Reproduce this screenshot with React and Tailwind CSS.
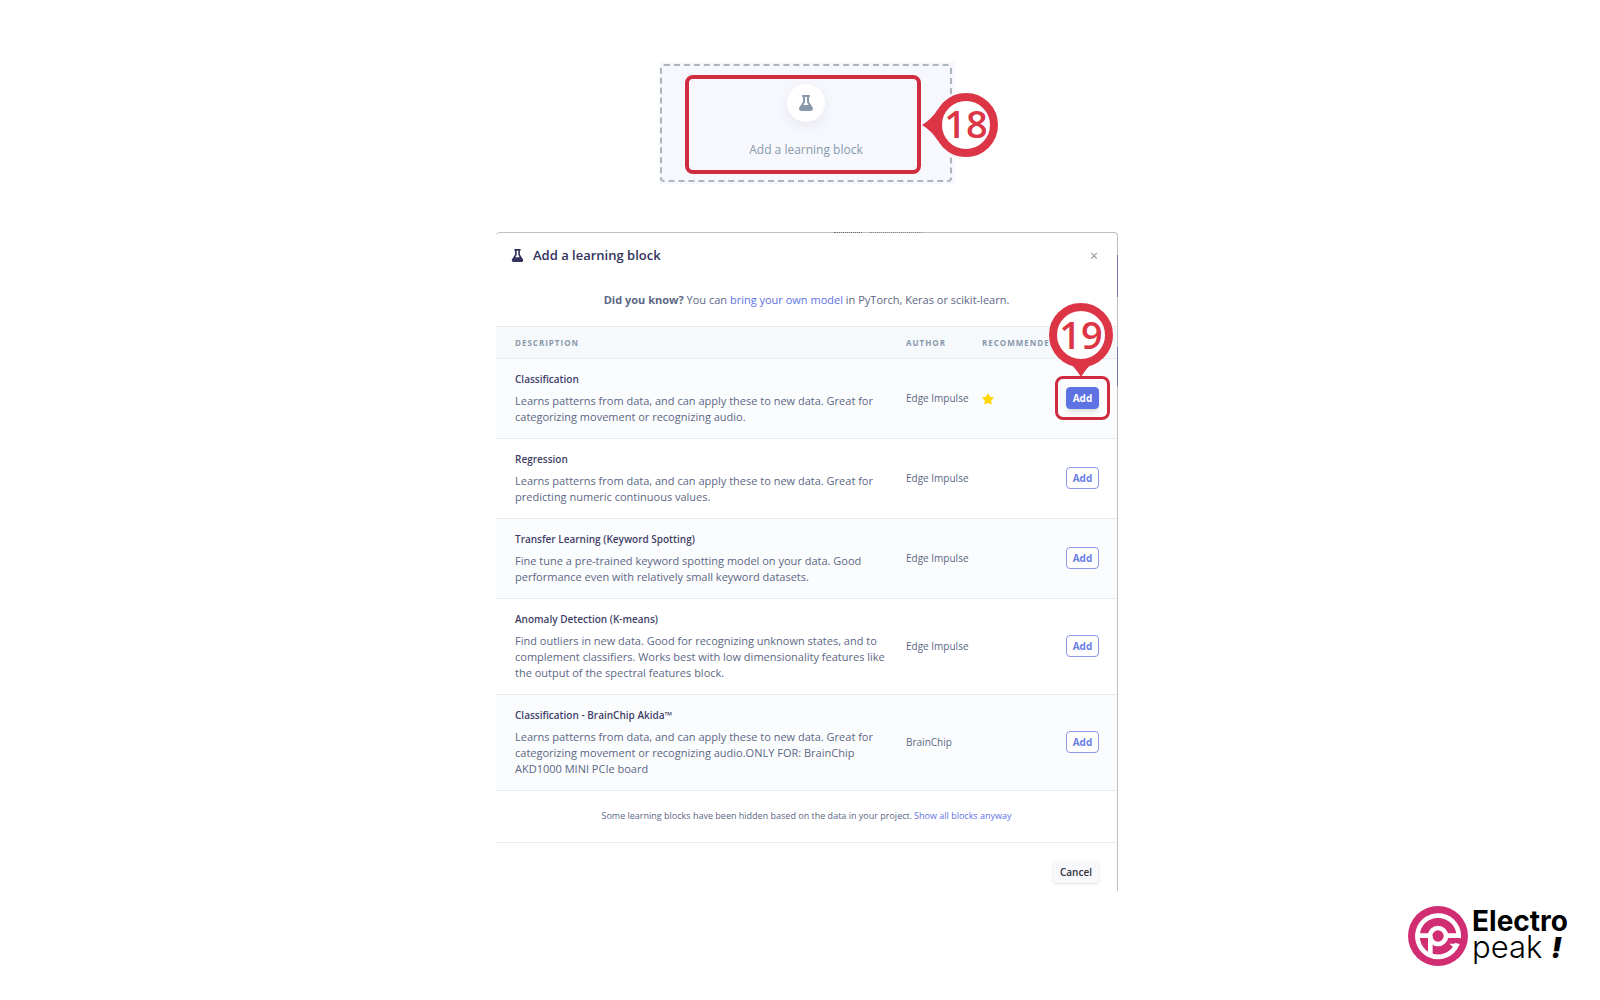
import { useState } from "react";
import { FaFlask, FaStar } from "react-icons/fa";

const blocks = [
    {
        name: "Classification",
        text: "Learns patterns from data, and can apply these to new data. Great for categorizing movement or recognizing audio.",
        author: "Edge Impulse",
        recommended: true
    },
    {
        name: "Regression",
        text: "Learns patterns from data, and can apply these to new data. Great for predicting numeric continuous values.",
        author: "Edge Impulse"
    },
    {
        name: "Transfer Learning (Keyword Spotting)",
        text: "Fine tune a pre-trained keyword spotting model on your data. Good performance even with relatively small keyword datasets.",
        author: "Edge Impulse"
    },
    {
        name: "Anomaly Detection (K-means)",
        text: "Find outliers in new data. Good for recognizing unknown states, and to complement classifiers. Works best with low dimensionality features like the output of the spectral features block.",
        author: "Edge Impulse"
    },
    {
        name: "Classification - BrainChip Akida™",
        text: "Learns patterns from data, and can apply these to new data. Great for categorizing movement or recognizing audio.ONLY FOR: BrainChip AKD1000 MINI PCIe board",
        author: "BrainChip"
    }
];

// numbered pin, the tip points left or down
function Marker({ number, tip, className }) {
    return (
        <svg className={className} width="76" height="76" viewBox="0 0 76 76" aria-label={`Step ${number}`}>
            {tip === "left"
                ? <path d="M0 38 Q10 32 16 22 L16 54 Q10 44 0 38Z" fill="#dc3545" />
                : <path d="M38 76 Q32 66 22 58 L54 58 Q44 66 38 76Z" fill="#dc3545" />}
            <circle cx={tip === "left" ? 44 : 38} cy={tip === "left" ? 38 : 34} r="28" fill="#fff" stroke="#dc3545" strokeWidth="8" />
            <text x={tip === "left" ? 44 : 38} y={tip === "left" ? 51 : 48} textAnchor="middle" fill="#dc3545" className="font-['Open_Sans',sans-serif] text-[38px] font-semibold">{number}</text>
        </svg>
    )
}

function Logo() {
    return (
        <div className="flex items-center gap-1 text-black">
            <svg width="60" height="60" viewBox="0 0 180 180" aria-hidden="true">
                <circle cx="90" cy="90" r="90" fill="#d12d72" />
                <g fill="none" stroke="#fff" strokeWidth="14">
                    <path d="M152 96 A62 62 0 1 0 67 148" />
                    <path d="M61 145 A62 62 0 0 0 148 113" />
                    <circle cx="90" cy="90" r="24" />
                    <path d="M30 89 H66 M114 89 H156" />
                    <path d="M67 90 V150" />
                </g>
                <path d="M124 113 H155 L148 126 L136 124Z" fill="#fff" />
            </svg>
            <div className="pb-1 font-['Inter',sans-serif]">
                <p className="text-[28px] leading-[26px] font-bold">Electro</p>
                <p className="text-[31px] leading-[26px] font-light">peak <span className="text-[28px] font-black italic">!</span></p>
            </div>
        </div>
    )
}

export default function App() {

    const [selected, setSelected] = useState("Classification");

    return (
        <div className="min-h-screen bg-white flex flex-col font-['Open_Sans',sans-serif] text-[#5c6784]">
            <main className="flex flex-col items-center gap-12 pt-[62px] pl-[14px]">
                <div className="relative w-[296px] bg-[#f7f8fd] py-[2px] pl-[1px] pr-[3px]">
                    <button className="w-full h-[118px] flex flex-col items-center rounded border-2 border-dashed border-[#adb5bd] pt-[18px]">
                        <span className="w-[38px] h-[38px] flex justify-center items-center rounded-full bg-white text-[#8898aa] shadow-[0_4px_12px_rgba(50,50,93,0.08)]">
                            <FaFlask size={16} />
                        </span>
                        <span className="mt-[19px] text-[12px] leading-[18px] text-[#8898aa]">Add a learning block</span>
                    </button>
                    <div className="absolute left-[26px] top-[13px] w-[236px] h-[99px] rounded-lg border-4 border-[#cf2c3f] pointer-events-none"></div>
                    <Marker number="18" tip="left" className="absolute left-[263px] top-[25px]" />
                </div>

                <section role="dialog" aria-labelledby="dialog-title" className="relative w-full max-w-[622px] bg-white border-t border-r border-[#bfc0c4] rounded-t">
                    {/* page behind the dialog showing at its edges */}
                    <span className="absolute -top-px left-[338px] w-[28px] border-t border-dotted border-[#6a6a7a]"></span>
                    <span className="absolute -top-px left-[374px] w-[52px] border-t border-dotted border-[#8a8a9a]"></span>
                    <span className="absolute -right-px top-[22px] h-[42px] w-px bg-[#7b76b8]"></span>
                    <span className="absolute -right-px top-[114px] h-[39px] w-px bg-[#7b76b8]"></span>

                    <header className="h-[45px] flex items-center justify-between pl-[15px] pr-[19px]">
                        <h2 id="dialog-title" className="flex items-center gap-[9px] text-[13px] font-semibold text-[#32325d]">
                            <FaFlask size={13} />
                            Add a learning block
                        </h2>
                        <button aria-label="Close" className="text-[14px] leading-4 text-[#8f8f9b]">×</button>
                    </header>

                    <p className="h-[48px] pt-[14px] text-center text-[11px] leading-4">
                        <b className="font-bold">Did you know?</b> You can <a href="#" className="text-[#5e72e4]">bring your own model</a> in PyTorch, Keras or scikit-learn.
                    </p>

                    <table className="w-full table-fixed text-left">
                        <thead>
                            <tr className="h-8 border-y border-[#e9ecef] bg-[#f6f9fc] text-[8px] tracking-[1px] text-[#8898aa]">
                                <th className="w-[410px] pl-[19px] font-bold">DESCRIPTION</th>
                                <th className="w-[76px] font-bold">AUTHOR</th>
                                <th className="font-bold">RECOMMENDED</th>
                                <th className="w-[51px]"></th>
                            </tr>
                        </thead>
                        <tbody>
                            {blocks.map((item) => (
                                <tr key={item.name} className="border-b border-[#e9ecef] odd:bg-[#fbfcfe]">
                                    <td className="pl-[19px] pr-5 pt-3 pb-[13px]">
                                        <h3 className="text-[10px] leading-4 font-semibold text-[#3f3f68]">{item.name}</h3>
                                        <p className="mt-1.5 text-[11px] leading-4">{item.text}</p>
                                    </td>
                                    <td className="text-[10px]">{item.author}</td>
                                    <td>{item.recommended && <FaStar size={12} className="text-[#ffd600]" title="Recommended" />}</td>
                                    <td className="pb-[2px]">
                                        <div className="relative w-[33px]">
                                            <button
                                                onClick={() => setSelected(item.name)}
                                                className={`block w-full h-[22px] rounded border text-[10px] leading-4 font-bold ${selected === item.name ? "bg-[#5e72e4] border-[#5e72e4] text-white shadow-md" : "bg-white border-[#8d9aeb] text-[#6b7de6]"}`}
                                            >
                                                Add
                                            </button>
                                            {item.recommended && (
                                                <>
                                                    <div className="absolute -inset-[11px] rounded-lg border-[3px] border-[#cf2c3f] pointer-events-none"></div>
                                                    <Marker number="19" tip="down" className="absolute bottom-[32px] -left-[23px]" />
                                                </>
                                            )}
                                        </div>
                                    </td>
                                </tr>
                            ))}
                        </tbody>
                    </table>

                    <p className="h-[52px] flex items-center justify-center gap-[2px] border-b border-[#e9ecef] pb-[2px] text-[9px]">
                        Some learning blocks have been hidden based on the data in your project. <a href="#" className="text-[#5e72e4]">Show all blocks anyway</a>
                    </p>

                    <footer className="h-[48px] flex justify-end items-start pt-[18px] pr-[18px]">
                        <button className="h-[22px] w-[46px] rounded bg-[#f7f8fb] text-[10px] font-semibold text-[#32323d] shadow">Cancel</button>
                    </footer>
                </section>
            </main>

            <div className="self-end pt-[15px] pr-8">
                <Logo />
            </div>
        </div>
    )
}
